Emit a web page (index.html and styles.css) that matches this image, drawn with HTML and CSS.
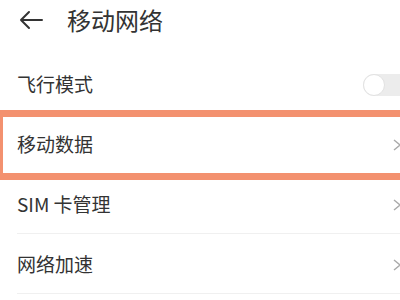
FILE: index.html
```html
<!DOCTYPE html>
<html lang="zh-CN">
<head>
    <title>移动网络</title>
    <meta charset="utf-8">
    <link rel="stylesheet" href="styles.css">
</head>
<body>
<div class="header">
    <svg class="back" width="24" height="20" viewBox="0 0 24 20">
        <path d="M23 10 H2 M10 2 L2 10 L10 18" fill="none" stroke="#333" stroke-width="2" stroke-linecap="round" stroke-linejoin="round"/>
    </svg>
    <span class="title">移动网络</span>
</div>
<div class="list">
    <div class="row">
        <span class="label">飞行模式</span>
        <span class="toggle"><span class="knob"></span></span>
    </div>
    <div class="row highlight">
        <span class="label">移动数据</span>
        <svg class="chev" width="7" height="12" viewBox="0 0 7 12">
            <path d="M1 1 L7 6 L1 11" fill="none" stroke="#aaa" stroke-width="1.4"/>
        </svg>
        <div class="mark"></div>
    </div>
    <div class="row">
        <span class="label">SIM 卡管理</span>
        <svg class="chev" width="7" height="12" viewBox="0 0 7 12">
            <path d="M1 1 L7 6 L1 11" fill="none" stroke="#aaa" stroke-width="1.4"/>
        </svg>
    </div>
    <div class="row">
        <span class="label">网络加速</span>
        <svg class="chev" width="7" height="12" viewBox="0 0 7 12">
            <path d="M1 1 L7 6 L1 11" fill="none" stroke="#aaa" stroke-width="1.4"/>
        </svg>
    </div>
</div>
</body>
</html>
```

FILE: styles.css
```css
html, body {
    margin: 0;
    background: #fff;
    overflow: hidden;
}

body {
    font-family: "Noto Sans CJK SC", "Noto Sans", sans-serif;
    color: #333;
    width: 400px;
    height: 300px;
}

.header {
    height: 53px;
    display: flex;
    align-items: center;
    padding-left: 19px;
    padding-bottom: 1px;
}

.back {
    display: block;
    margin-top: -14px;
}

.title {
    font-size: 24px;
    margin-left: 24px;
    margin-top: -14px;
    line-height: 1;
}

.list {
    padding-left: 17px;
}

.row {
    position: relative;
    height: 59px;
    border-bottom: 1px solid #f0f0f0;
    display: flex;
    align-items: center;
    justify-content: space-between;
}

.label {
    font-size: 19px;
    line-height: 1;
    margin-top: 0;
}

.toggle {
    width: 37px;
    height: 22px;
    margin-top: 2px;
    border-radius: 11px 0 0 11px;
    background: #ececec;
    display: flex;
}

.knob {
    width: 20px;
    height: 20px;
    border-radius: 50%;
    background: #fff;
    border: 1px solid #e2e2e2;
}

.chev {
    display: block;
    margin-top: 2px;
}

.mark {
    position: absolute;
    top: -4px;
    bottom: -7px;
    left: -17px;
    right: 0;
    border: 7px solid #f3916f;
    border-left-width: 3px;
    border-right-width: 0;
}
```
